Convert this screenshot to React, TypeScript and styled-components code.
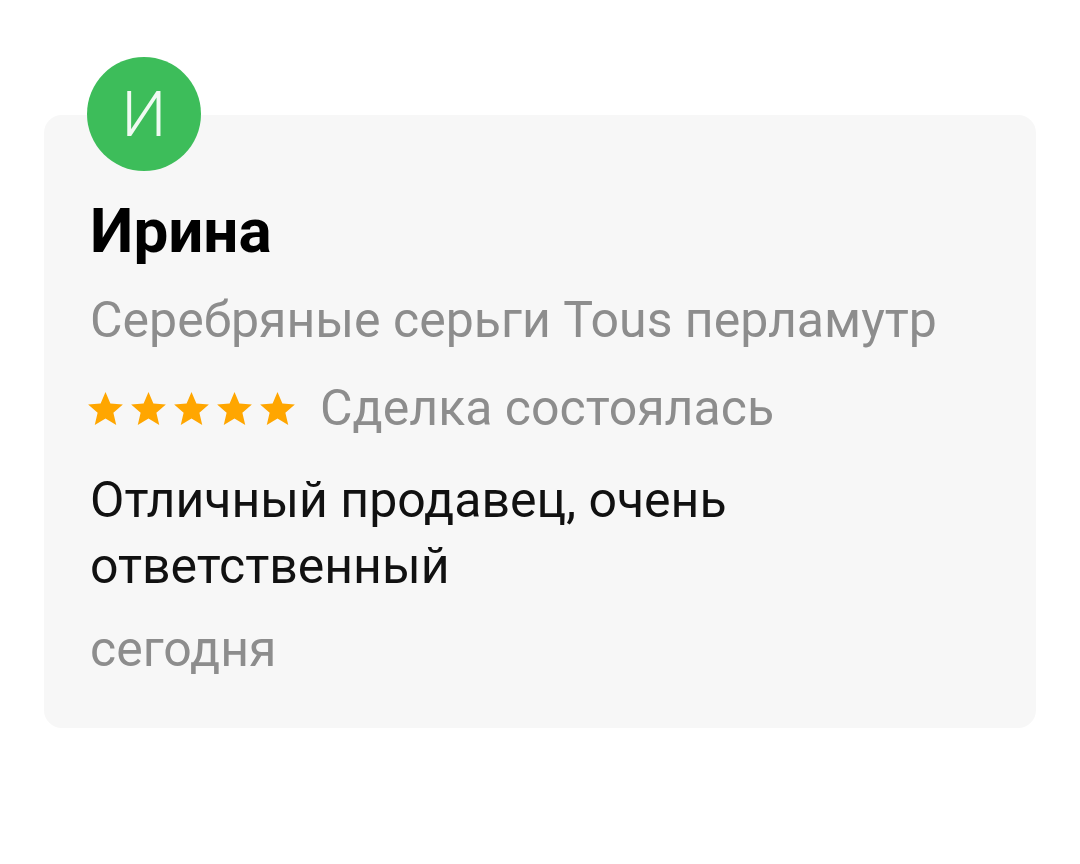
import React from "react";
import styled, { createGlobalStyle } from "styled-components";

const Global = createGlobalStyle`
  html, body { margin: 0; padding: 0; background: #ffffff; }
  body { font-family: Roboto, "Noto Sans", sans-serif; }
`;

const Page = styled.div`
  width: 1080px;
  height: 864px;
  padding: 57px 44px 0 44px;
  box-sizing: border-box;
`;

const Card = styled.div`
  margin-top: 58px;
  width: 992px;
  height: 613px;
  box-sizing: border-box;
  background: #f7f7f7;
  border-radius: 18px;
  padding: 0 46px;
  display: flex;
  flex-direction: column;
`;

const Avatar = styled.div`
  width: 114px;
  height: 114px;
  border-radius: 50%;
  background: #3dbd5a;
  color: rgba(255, 255, 255, 0.92);
  font-family: Roboto, sans-serif;
  font-weight: 300;
  font-size: 63px;
  display: flex;
  align-items: center;
  justify-content: center;
  margin-top: -58px;
  margin-left: -3px;
`;

const Name = styled.div`
  font-family: Roboto, sans-serif;
  font-weight: 700;
  font-size: 62px;
  line-height: 70px;
  color: #000;
  margin-top: 25px;
`;

const Muted = styled.div`
  font-family: Roboto, sans-serif;
  font-size: 50px;
  line-height: 60px;
  color: #8d8d8d;
`;

const Subtitle = styled(Muted)`
  margin-top: 24px;
`;

const RatingRow = styled.div`
  display: flex;
  align-items: center;
  gap: 25px;
  margin-top: 28px;
`;

const Stars = styled.div`
  display: flex;
  gap: 8px;
  margin-left: -2px;
`;

const Body = styled.div`
  font-family: Roboto, sans-serif;
  font-size: 50px;
  line-height: 66px;
  color: #111;
  margin-top: 29px;
  width: 700px;
`;

const DateText = styled(Muted)`
  margin-top: 20px;
`;

const Star = () => (
  <svg width="35" height="33" viewBox="2 2 20 19">
    <path
      d="M12 17.27L18.18 21l-1.64-7.03L22 9.24l-7.19-.61L12 2 9.19 8.63 2 9.24l5.46 4.73L5.82 21z"
      fill="#ffa600"
    />
  </svg>
);

export default function App() {
  return (
    <Page>
      <Global />
      <Card>
        <Avatar>И</Avatar>
        <Name>Ирина</Name>
        <Subtitle>Серебряные серьги Tous перламутр</Subtitle>
        <RatingRow>
          <Stars>
            {[0, 1, 2, 3, 4].map((i) => (
              <Star key={i} />
            ))}
          </Stars>
          <Muted>Сделка состоялась</Muted>
        </RatingRow>
        <Body>Отличный продавец, очень ответственный</Body>
        <DateText>сегодня</DateText>
      </Card>
    </Page>
  );
}
